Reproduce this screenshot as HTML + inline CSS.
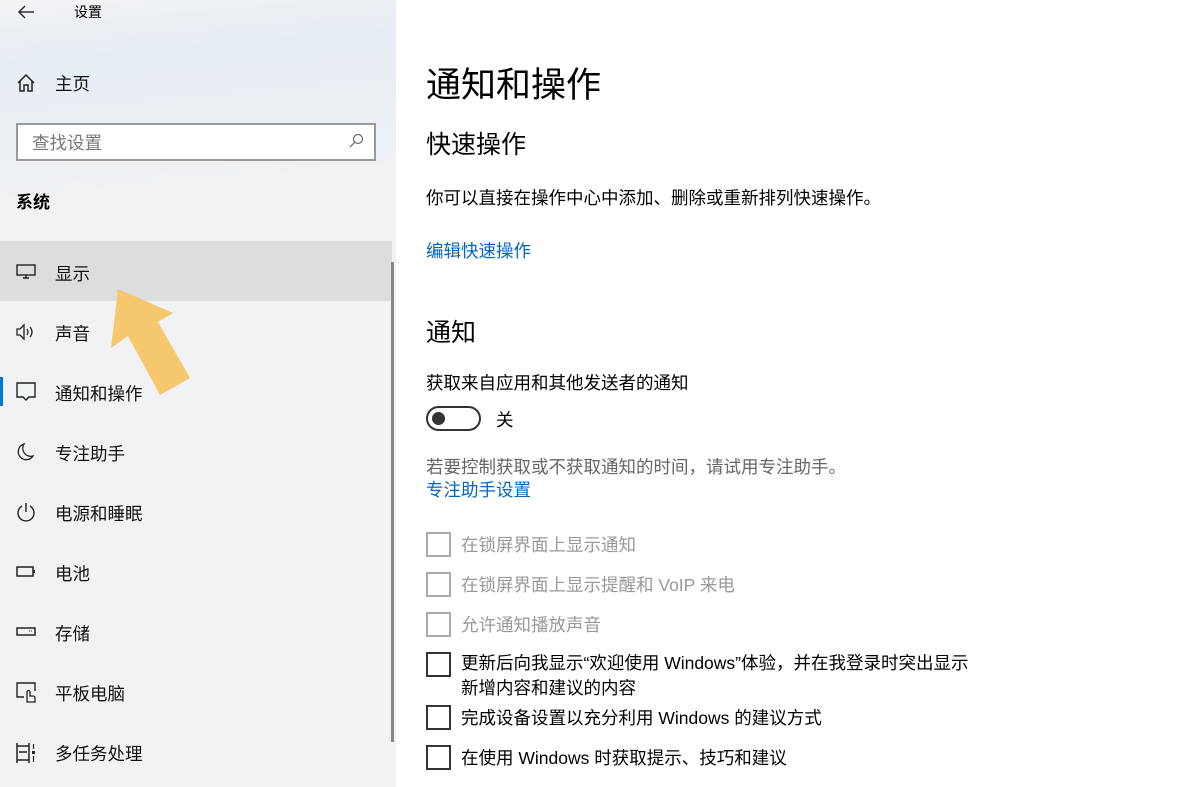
<!DOCTYPE html>
<html><head><meta charset="utf-8"><style>
*{margin:0;padding:0;box-sizing:border-box}
body{width:1181px;height:787px;overflow:hidden;background:#fff;font-family:"Liberation Sans","Noto Sans CJK SC",sans-serif;color:#000;position:relative}
.side{position:absolute;left:0;top:0;width:396px;height:787px;background:linear-gradient(175deg,#f2f3f5 0%,#e6edf4 8%,#f0f2f4 25%,#f1f2f3 60%,#f2f2f2 100%)}
.t{position:absolute;white-space:nowrap}
.nav{position:absolute;left:55px;font-size:17.5px;color:#111}
.ic{position:absolute;left:16px}
.cb{position:absolute;left:426px;width:25px;height:25px;border:2px solid #333}
.cb.d{border-color:#aaa}
.lbl{position:absolute;left:461px;font-size:17.5px;white-space:nowrap}
</style></head><body>
<div class="side">
<svg class="ic" style="left:16px;top:3px" width="20" height="18" viewBox="0 0 20 18"><path d="M18 9H3M9 3L3 9l6 6" fill="none" stroke="#333" stroke-width="1.5"/></svg>
<div class="t" style="left:74px;top:2px;font-size:14px">设置</div>
<svg class="ic" style="top:73px" width="20" height="20" viewBox="0 0 20 20"><path d="M2 10L10 2l8 8M4 8v10h4v-6h4v6h4V8" fill="none" stroke="#222" stroke-width="1.5"/></svg>
<div class="nav" style="top:71px">主页</div>
<div style="position:absolute;left:16px;top:123px;width:360px;height:38px;border:2px solid #999;background:#fff"></div>
<div class="t" style="left:32px;top:130px;font-size:17.5px;color:#777">查找设置</div>
<svg class="ic" style="left:348px;top:133px" width="16" height="16" viewBox="0 0 16 16"><circle cx="10" cy="6" r="4.5" fill="none" stroke="#666" stroke-width="1.2"/><path d="M7 9L2 14" stroke="#666" stroke-width="1.2"/></svg>
<div class="t" style="left:16px;top:188px;font-size:17px;font-weight:bold">系统</div>
<div style="position:absolute;left:0;top:241px;width:392px;height:60px;background:#dcdddd"></div>
<div style="position:absolute;left:391px;top:262px;width:3px;height:480px;background:#888"></div>
<div style="position:absolute;left:0;top:377px;width:3px;height:29px;background:#0078d7"></div>
<svg class="ic" style="top:264px" width="20" height="16" viewBox="0 0 20 16"><rect x="1" y="1" width="18" height="10" fill="none" stroke="#222" stroke-width="1.4"/><path d="M10 11v3M7 14h6" stroke="#222" stroke-width="1.4"/></svg>
<div class="nav" style="top:261px">显示</div>
<svg class="ic" style="top:322px" width="20" height="20" viewBox="0 0 20 20"><path d="M1 7h3l4-4v14l-4-4H1z" fill="none" stroke="#222" stroke-width="1.3"/><path d="M11 7q2 3 0 6M14 5q4 5 0 10" fill="none" stroke="#222" stroke-width="1.3"/></svg>
<div class="nav" style="top:321px">声音</div>
<svg class="ic" style="top:382px" width="20" height="20" viewBox="0 0 20 20"><path d="M1 1h18v14h-6l-3 3-3-3H1z" fill="none" stroke="#222" stroke-width="1.4"/></svg>
<div class="nav" style="top:381px">通知和操作</div>
<svg class="ic" style="top:442px" width="20" height="20" viewBox="0 0 20 20"><path d="M8 2a8 8 0 1 0 9 12A8 8 0 0 1 8 2z" fill="none" stroke="#222" stroke-width="1.3"/></svg>
<div class="nav" style="top:441px">专注助手</div>
<svg class="ic" style="top:502px" width="20" height="20" viewBox="0 0 20 20"><path d="M6 4a8 8 0 1 0 8 0M10 1v9" fill="none" stroke="#222" stroke-width="1.4"/></svg>
<div class="nav" style="top:501px">电源和睡眠</div>
<svg class="ic" style="top:565px" width="20" height="14" viewBox="0 0 20 14"><rect x="1" y="2" width="16" height="9" fill="none" stroke="#222" stroke-width="1.5"/><rect x="17" y="5" width="2" height="3" fill="#222"/></svg>
<div class="nav" style="top:561px">电池</div>
<svg class="ic" style="top:626px" width="20" height="12" viewBox="0 0 20 12"><rect x="1" y="2" width="18" height="7" fill="none" stroke="#222" stroke-width="1.5"/><path d="M13 5h1M15 5h1" stroke="#222"/></svg>
<div class="nav" style="top:621px">存储</div>
<svg class="ic" style="top:682px" width="22" height="22" viewBox="0 0 22 22"><path d="M8 15H1V1h18v8" fill="none" stroke="#222" stroke-width="1.4"/><path d="M11 19v-9a1.5 1.5 0 0 1 3 0v4h3a2 2 0 0 1 2 2v4h-8z" fill="none" stroke="#222" stroke-width="1.3"/></svg>
<div class="nav" style="top:681px">平板电脑</div>
<svg class="ic" style="top:742px" width="22" height="22" viewBox="0 0 22 22"><path d="M1 1v20M13 1v20M1 4h12M1 18h12M3 10h8" fill="none" stroke="#222" stroke-width="1.5"/><rect x="16" y="9" width="3" height="3" fill="#222"/><path d="M17.5 2v5M17.5 14v6" stroke="#222" stroke-width="1.2"/></svg>
<div class="nav" style="top:741px">多任务处理</div>
<svg style="position:absolute;left:0;top:0" width="396" height="420" viewBox="0 0 396 420"><path d="M118 289L111 348L128 336L160 395L190 378L158 322L173 313Z" fill="#f6c86e"/></svg>
</div>
<div class="t" style="left:426px;top:57px;font-size:35px">通知和操作</div>
<div class="t" style="left:426px;top:125px;font-size:25px">快速操作</div>
<div class="t" style="left:426px;top:185px;font-size:17.5px">你可以直接在操作中心中添加、删除或重新排列快速操作。</div>
<div class="t" style="left:426px;top:238px;font-size:17.5px;color:#0067c0">编辑快速操作</div>
<div class="t" style="left:426px;top:313px;font-size:25px">通知</div>
<div class="t" style="left:426px;top:370px;font-size:17.5px">获取来自应用和其他发送者的通知</div>
<div style="position:absolute;left:426px;top:406px;width:55px;height:25px;border:2px solid #333;border-radius:13px"></div>
<div style="position:absolute;left:432px;top:412px;width:13px;height:13px;border-radius:50%;background:#333"></div>
<div class="t" style="left:496px;top:407px;font-size:17.5px">关</div>
<div class="t" style="left:426px;top:454px;font-size:17.5px;color:#666">若要控制获取或不获取通知的时间，请试用专注助手。</div>
<div class="t" style="left:426px;top:477px;font-size:17.5px;color:#0067c0">专注助手设置</div>
<div class="cb d" style="top:532px"></div><div class="lbl" style="top:532px;color:#999">在锁屏界面上显示通知</div>
<div class="cb d" style="top:572px"></div><div class="lbl" style="top:572px;color:#999">在锁屏界面上显示提醒和 VoIP 来电</div>
<div class="cb d" style="top:612px"></div><div class="lbl" style="top:612px;color:#999">允许通知播放声音</div>
<div class="cb" style="top:652px"></div><div class="lbl" style="top:651px;line-height:25px">更新后向我显示“欢迎使用 Windows”体验，并在我登录时突出显示<br>新增内容和建议的内容</div>
<div class="cb" style="top:705px"></div><div class="lbl" style="top:705px">完成设备设置以充分利用 Windows 的建议方式</div>
<div class="cb" style="top:745px"></div><div class="lbl" style="top:745px">在使用 Windows 时获取提示、技巧和建议</div>
</body></html>
